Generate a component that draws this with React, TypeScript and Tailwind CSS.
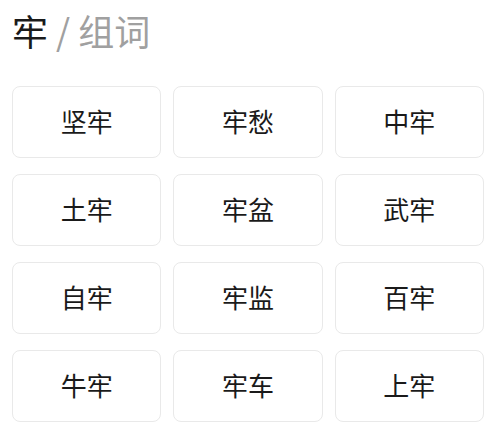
const words = ['坚牢', '牢愁', '中牢', '土牢', '牢盆', '武牢', '自牢', '牢监', '百牢', '牛牢', '牢车', '上牢'];

export default function App() {
  return (
    <div
      className="w-[500px] h-[430px] bg-white overflow-hidden"
      style={{ fontFamily: '"Noto Sans CJK SC", "Noto Sans", sans-serif' }}
    >
      <div className="pl-3 pt-[6px] h-[86px] text-[36px] leading-[48px]">
        <span className="text-[#1a1a1a]">牢</span>
        <span className="text-[#a0a0a0]"> / 组词</span>
      </div>
      <div className="grid grid-cols-3 gap-x-3 gap-y-4 pl-3 pr-4">
        {words.map((w) => (
          <div
            key={w}
            className="h-[72px] pb-1 flex items-center justify-center rounded-lg border border-[#e9e9e9] text-[26px] text-[#1a1a1a]"
          >
            {w}
          </div>
        ))}
      </div>
    </div>
  );
}
